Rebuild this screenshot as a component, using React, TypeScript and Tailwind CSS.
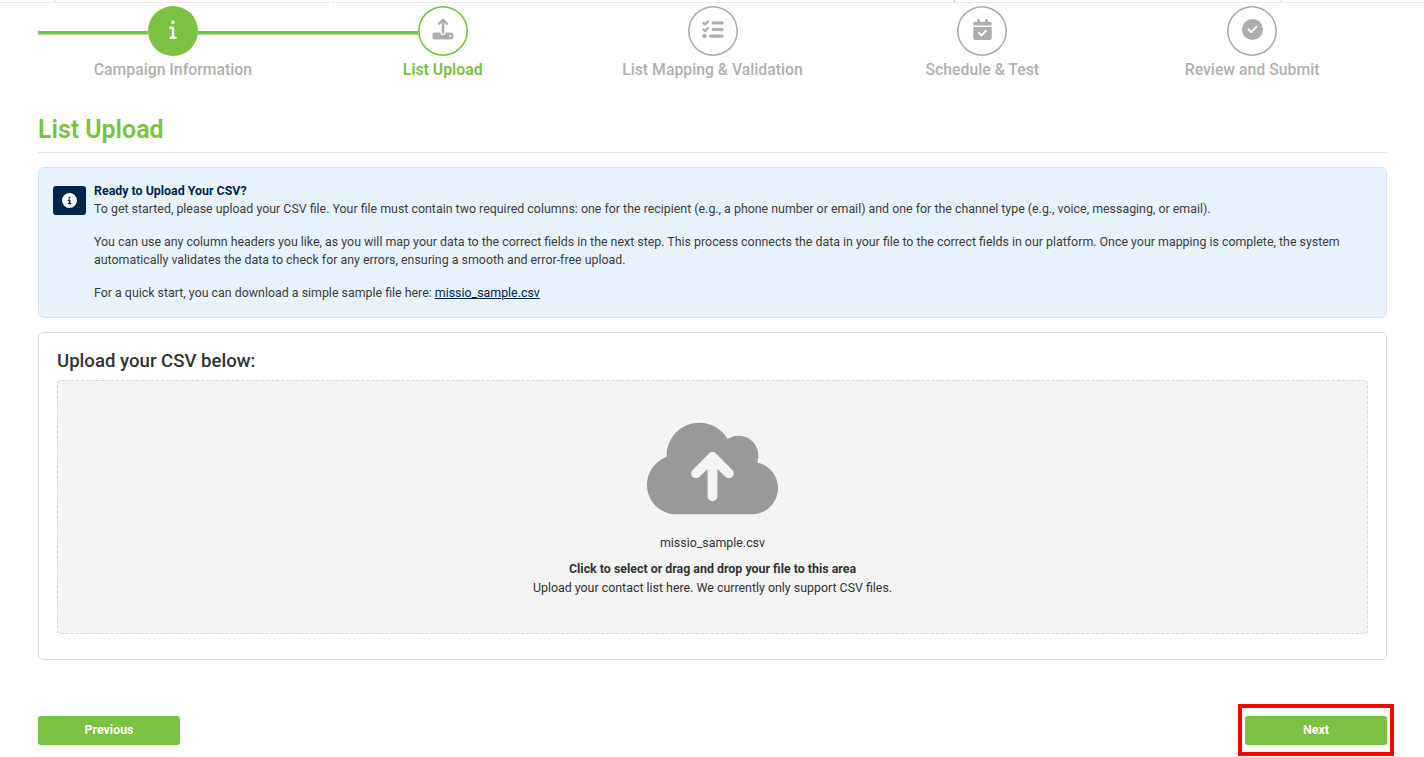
import React from 'react';
import { FaInfo, FaListCheck, FaCalendarCheck, FaCircleCheck, FaCircleInfo, FaCloudArrowUp } from 'react-icons/fa6';

interface Step {
  label: string;
  icon: React.ReactNode;
  state: 'done' | 'current' | 'pending';
}

const UploadIcon: React.FC = () => (
  <svg className="w-[22px] h-[22px]" viewBox="0 0 22 22" fill="none">
    <path d="M11 14.5V2M7.2 5.6L11 1.8L14.8 5.6" stroke="currentColor" strokeWidth="2.5" strokeLinecap="round" strokeLinejoin="round" />
    <path
      d="M3.2 14.6H8.4V14.8C8.4 16.2 9.5 17.2 11 17.2S13.6 16.2 13.6 14.8V14.6H18.8C20.3 14.6 21.6 15.8 21.6 17.2V18.8C21.6 20.4 20.3 21.6 18.8 21.6H3.2C1.7 21.6 0.4 20.4 0.4 18.8V17.2C0.4 15.8 1.7 14.6 3.2 14.6Z"
      fill="currentColor"
    />
    <circle cx="18.3" cy="18" r="0.9" fill="white" />
  </svg>
);

const steps: Step[] = [
  { label: 'Campaign Information', icon: <FaInfo className="w-5 h-5" />, state: 'done' },
  { label: 'List Upload', icon: <UploadIcon />, state: 'current' },
  { label: 'List Mapping & Validation', icon: <FaListCheck className="w-[22px] h-[21px]" stroke="currentColor" strokeWidth={10} />, state: 'pending' },
  { label: 'Schedule & Test', icon: <FaCalendarCheck className="w-[21px] h-[21px]" />, state: 'pending' },
  { label: 'Review and Submit', icon: <FaCircleCheck className="w-[21px] h-[21px]" />, state: 'pending' },
];

const circleStyles = {
  done: 'bg-[#7bc142] text-white',
  current: 'bg-white text-[#adadad] shadow-[inset_0_0_0_1.6px_#7bc142]',
  pending: 'bg-white text-[#adadad] shadow-[inset_0_0_0_1.6px_#adadad]',
};

const lineStyle = 'bg-[#7bc142] border-b border-[#b5dc92]';

const Stepper: React.FC = () => (
  <div className="grid grid-cols-5 mt-[3px]">
    {steps.map((step) => (
      <div key={step.label} className="flex flex-col items-center">
        <div className="flex w-full items-center">
          <div className={`flex-1 h-1 mt-1 ${step.state === 'pending' ? '' : lineStyle}`} />
          <div className={`w-[50px] h-[50px] rounded-full flex items-center justify-center pb-1 ${circleStyles[step.state]}`}>
            {step.icon}
          </div>
          <div className={`flex-1 h-1 mt-1 ${step.state === 'done' ? lineStyle : ''}`} />
        </div>
        <span className={`mt-[3px] text-[15.8px] leading-[21px] ${step.state === 'current' ? 'font-semibold text-[#7bc142]' : 'font-medium text-[#b0b0b0]'}`}>
          {step.label}
        </span>
      </div>
    ))}
  </div>
);

const InfoPanel: React.FC = () => (
  <section className="mt-[14px] h-[151px] flex rounded-md border border-[#dbe2e9] bg-[#e8f2fd] pl-[14px] pt-[13px] text-[#3d3d3d]">
    <div className="w-[33px] h-[29px] mt-[5px] shrink-0 rounded-[3px] bg-[#00264d] flex items-center justify-center">
      <FaCircleInfo className="w-[15px] h-[15px] text-white" />
    </div>
    <div className="ml-2 mt-[0.5px] w-[1262px]">
      <p className="font-bold text-[#00264d]">Ready to Upload Your CSV?</p>
      <p>
        To get started, please upload your CSV file. Your file must contain two required columns: one for the recipient
        (e.g., a phone number or email) and one for the channel type (e.g., voice, messaging, or email).
      </p>
      <p className="mt-[14.2px]">
        You can use any column headers you like, as you will map your data to the correct fields in the next step. This
        process connects the data in your file to the correct fields in our platform. Once your mapping is complete, the
        system automatically validates the data to check for any errors, ensuring a smooth and error-free upload.
      </p>
      <p className="mt-[14.2px]">
        For a quick start, you can download a simple sample file here:{' '}
        <a className="text-[#00264d] underline" href="#">missio_sample.csv</a>
      </p>
    </div>
  </section>
);

const UploadPanel: React.FC = () => (
  <section className="mt-[14px] h-[328px] rounded-[5px] border border-[#d9d9de] px-[18px] pt-4">
    <h2 className="text-[18.6px] leading-6 font-medium text-[#333333]">Upload your CSV below:</h2>
    <div className="mt-[7px] h-[254px] rounded border border-dashed border-[#d9d9d9] bg-[#f4f4f4] flex flex-col items-center pt-[35px] text-[#333333]">
      <FaCloudArrowUp className="w-[131px] h-[105px] text-[#999999]" />
      <p className="mt-[13px]">missio_sample.csv</p>
      <p className="mt-[7.5px] font-bold">Click to select or drag and drop your file to this area</p>
      <p>Upload your contact list here. We currently only support CSV files.</p>
    </div>
  </section>
);

const App: React.FC = () => {
  return (
    <div className="w-[1424px] h-[757px] overflow-hidden bg-white font-['Roboto',sans-serif] text-[12.4px] leading-[18.6px]">
      {/* Bottom edge of the tab row */}
      <div className="flex h-[3px] border-b border-[#ebebeb]">
        <div className="w-14 border-r border-[#e2e2e2]" />
        <div className="w-[278px] border-r border-[#e2e2e2]" />
        <div className="w-[621px] border-r border-[#cccccc]" />
        <div className="w-[326px] border-r border-[#e2e2e2]" />
      </div>

      <main className="ml-[38px] w-[1349px]">
        <Stepper />
        <h1 className="mt-[33px] h-[40px] border-b border-[#e3e3e3] text-[24.9px] leading-[34px] font-semibold text-[#7bc142]">List Upload</h1>
        <InfoPanel />
        <UploadPanel />

        <div className="mt-[44px] -mr-[7px] flex items-center justify-between">
          <button className="w-[142px] h-[29px] rounded-[3px] bg-[#7bc142] font-bold text-white">Previous</button>
          <div className="w-[156px] h-[52px] border-4 border-[#ff0000] flex items-center justify-center">
            <button className="w-[142px] h-[29px] rounded-[3px] bg-[#7bc142] font-bold text-white">Next</button>
          </div>
        </div>
      </main>
    </div>
  );
};

export default App;
